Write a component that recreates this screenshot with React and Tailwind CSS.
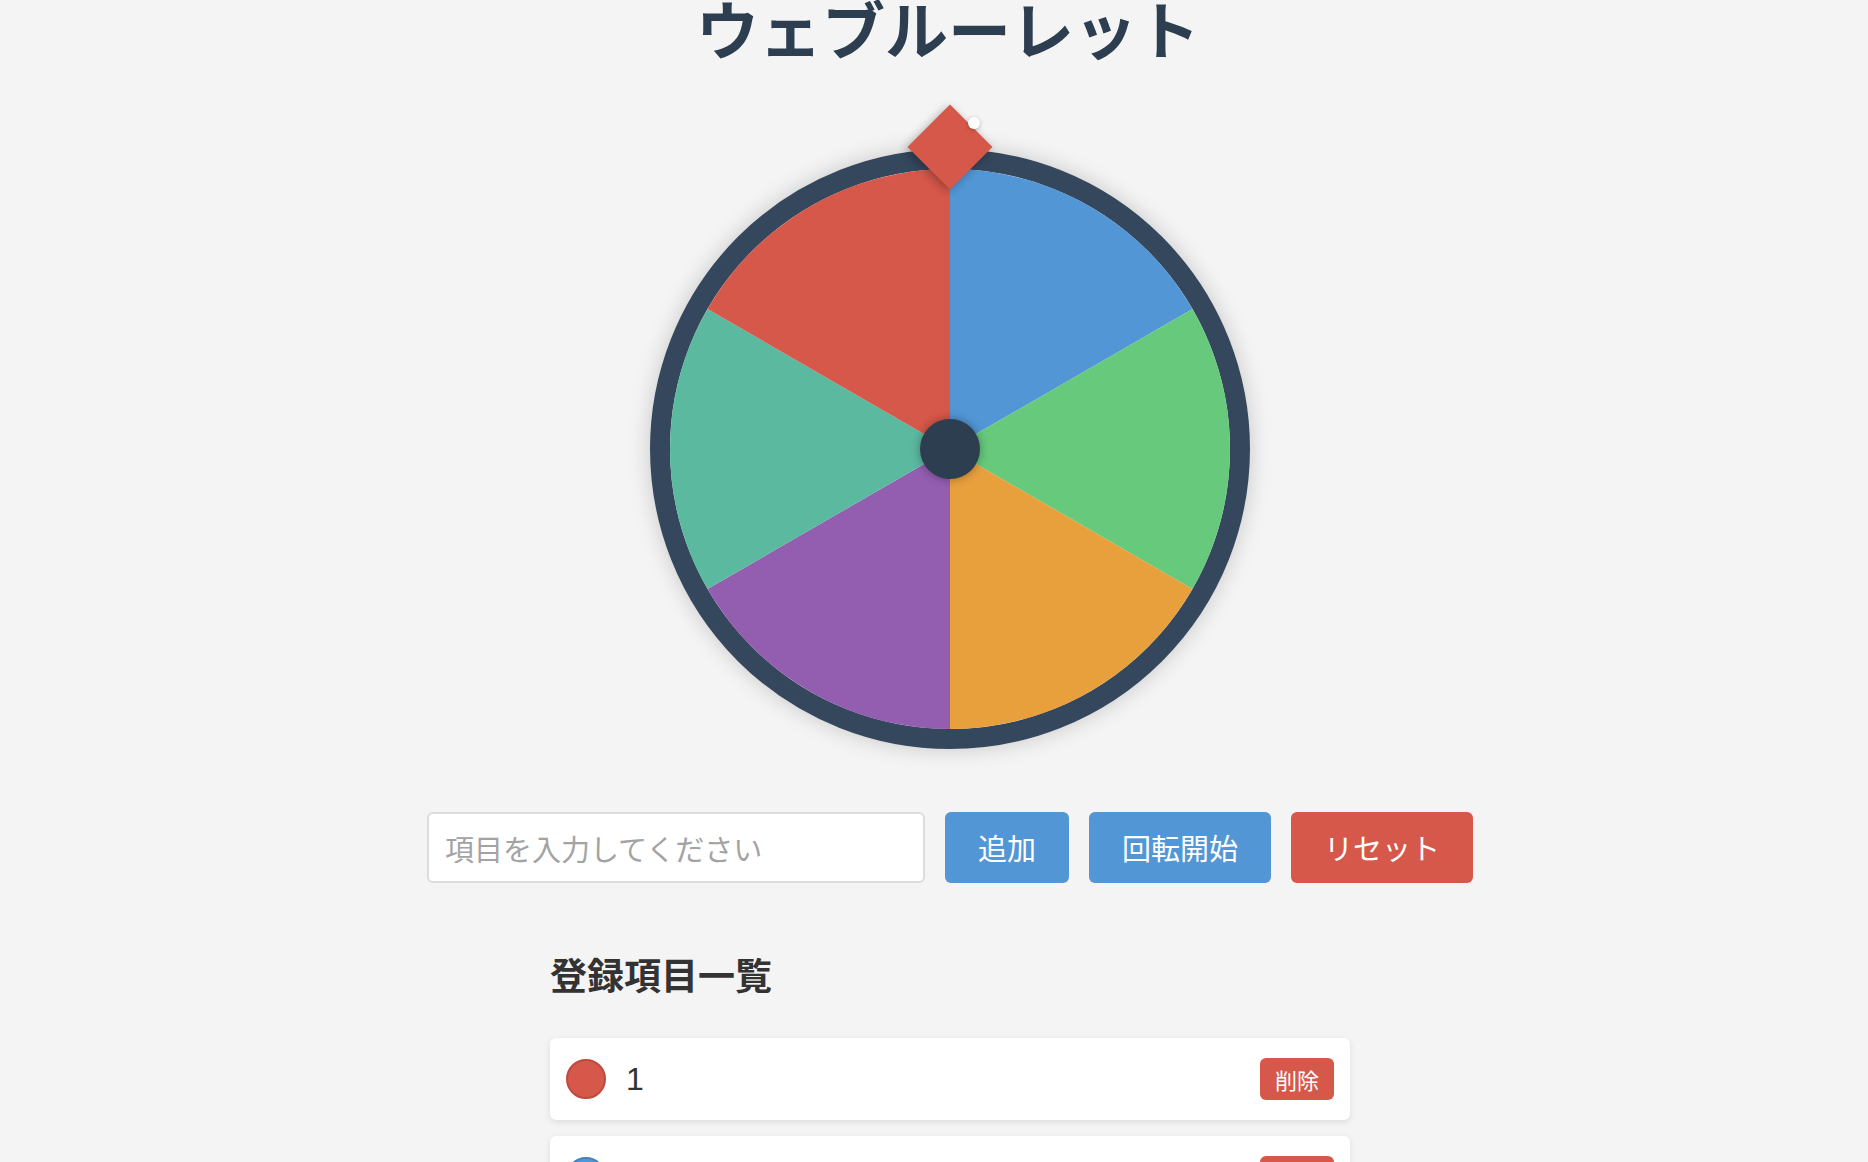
import React from 'react'

const segments = [
  { color: '#5296d5', start: 0 },
  { color: '#66c97b', start: 60 },
  { color: '#e8a03d', start: 120 },
  { color: '#935db0', start: 180 },
  { color: '#5bb99f', start: 240 },
  { color: '#d6584a', start: 300 },
]

const items = [
  { label: '1', color: '#d6584a', border: '#c04a3d' },
  { label: '2', color: '#5296d5', border: '#4583bf' },
  { label: '3', color: '#66c97b', border: '#56b16a' },
  { label: '4', color: '#e8a03d', border: '#cf8b2f' },
  { label: '5', color: '#935db0', border: '#7f4e99' },
  { label: '6', color: '#5bb99f', border: '#4ea28b' },
]

const point = (deg, r) => {
  const a = ((deg - 90) * Math.PI) / 180
  return [280 + r * Math.cos(a), 280 + r * Math.sin(a)]
}

const Wheel = () => (
  <div className="relative mt-[91px] h-[600px] w-[600px]">
    <div className="h-full w-full rounded-full border-[20px] border-[#35475c] shadow-[0_0_22px_rgba(0,0,0,0.18)] overflow-hidden">
      <svg width="560" height="560" viewBox="0 0 560 560" className="block">
        {segments.map((s) => {
          const [x1, y1] = point(s.start, 282)
          const [x2, y2] = point(s.start + 60, 282)
          return (
            <path
              key={s.start}
              d={`M280 280 L${x1} ${y1} A282 282 0 0 1 ${x2} ${y2} Z`}
              fill={s.color}
            />
          )
        })}
      </svg>
    </div>
    <div className="absolute left-[270px] top-[270px] h-[60px] w-[60px] rounded-full bg-[#2c3e50] shadow-[0_0_10px_rgba(0,0,0,0.35)]" />
    <div className="absolute left-[270px] top-[-32px] h-[60px] w-[60px] rotate-45 bg-[#d6584a] shadow-[0_3px_10px_rgba(0,0,0,0.3)]" />
    <div className="absolute left-[318px] top-[-32px] h-[12px] w-[12px] rounded-full bg-white shadow-[0_1px_4px_rgba(0,0,0,0.25)]" />
  </div>
)

export default function App() {
  return (
    <div
      className="min-h-screen bg-[#f4f4f4]"
      style={{ fontFamily: '"Noto Sans CJK JP", "Noto Sans", sans-serif' }}
    >
      <div className="flex flex-col items-center pl-8 pb-10">
        <h1 className="mt-[-4px] pr-[4px] text-[63px] font-bold leading-[62px] text-[#2c3e50]">
          ウェブルーレット
        </h1>

        <Wheel />

        <div className="mt-[63px] flex items-center gap-5">
          <input
            type="text"
            placeholder="項目を入力してください"
            className="h-[71px] w-[498px] rounded-[6px] border-2 border-[#dcdcdc] bg-white px-4 text-[29px] text-[#333] placeholder:text-[#a3a3a3] outline-none"
          />
          <button className="h-[71px] rounded-[6px] bg-[#5296d5] px-[33px] text-[29px] text-white">
            追加
          </button>
          <button className="h-[71px] rounded-[6px] bg-[#5296d5] px-[33px] text-[29px] text-white">
            回転開始
          </button>
          <button className="h-[71px] rounded-[6px] bg-[#d6584a] px-[33px] text-[29px] text-white">
            リセット
          </button>
        </div>

        <div className="mt-[73px] w-[800px]">
          <h2 className="text-[37px] font-bold leading-[37px] text-[#333]">登録項目一覧</h2>
          <div className="mt-[45px] flex flex-col gap-4">
            {items.map((item) => (
              <div
                key={item.label}
                className="flex h-[82px] items-center rounded-[6px] bg-white px-4 shadow-[0_2px_6px_rgba(0,0,0,0.1)]"
              >
                <div
                  className="h-10 w-10 rounded-full border-2"
                  style={{ backgroundColor: item.color, borderColor: item.border }}
                />
                <span className="ml-[20px] flex-1 font-['Liberation_Sans',sans-serif] text-[32px] text-[#333]">
                  {item.label}
                </span>
                <button className="h-[42px] rounded-[6px] bg-[#d6584a] px-[15px] text-[22px] text-white">
                  削除
                </button>
              </div>
            ))}
          </div>
        </div>
      </div>
    </div>
  )
}
